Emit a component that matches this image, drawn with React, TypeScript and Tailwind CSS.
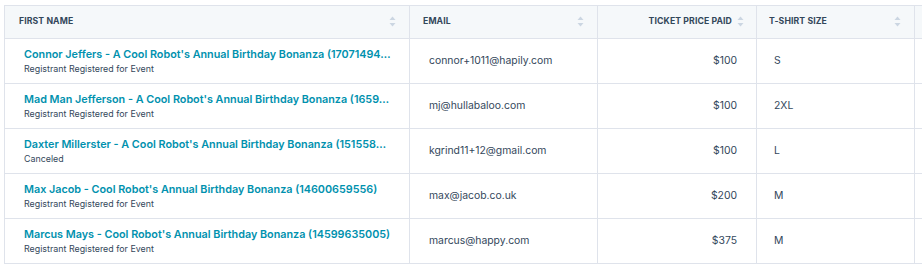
import React from "react";

const rows = [
  { name: "Connor Jeffers - A Cool Robot's Annual Birthday Bonanza (17071494…", sub: "Registrant Registered for Event", email: "connor+1011@hapily.com", price: "$100", size: "S" },
  { name: "Mad Man Jefferson - A Cool Robot's Annual Birthday Bonanza (1659…", sub: "Registrant Registered for Event", email: "mj@hullabaloo.com", price: "$100", size: "2XL" },
  { name: "Daxter Millerster - A Cool Robot's Annual Birthday Bonanza (151558…", sub: "Canceled", email: "kgrind11+12@gmail.com", price: "$100", size: "L" },
  { name: "Max Jacob - Cool Robot's Annual Birthday Bonanza (14600659556)", sub: "Registrant Registered for Event", email: "max@jacob.co.uk", price: "$200", size: "M" },
  { name: "Marcus Mays - Cool Robot's Annual Birthday Bonanza (14599635005)", sub: "Registrant Registered for Event", email: "marcus@happy.com", price: "$375", size: "M" },
];

function SortIcon() {
  return (
    <svg width="7" height="11" viewBox="0 0 7 11" className="shrink-0">
      <path d="M3.5 0.5 L6.5 4 L0.5 4 Z" fill="#cbd6e2" />
      <path d="M3.5 10.5 L6.5 7 L0.5 7 Z" fill="#cbd6e2" />
    </svg>
  );
}

export default function App() {
  return (
    <div className="w-[922px] h-[273px] overflow-hidden bg-white pl-[4px] pt-[5px]" style={{ fontFamily: '"Inter", "Liberation Sans", sans-serif' }}>
      <table className="table-fixed border-collapse w-[1010px] text-[#33475b]">
        <colgroup>
          <col className="w-[405px]" />
          <col className="w-[188px]" />
          <col className="w-[159px]" />
          <col className="w-[158px]" />
          <col className="w-[100px]" />
        </colgroup>
        <thead>
          <tr className="h-[33px] bg-[#f5f8fa]">
            <th className="border border-[#dfe3eb] pl-[14px] pr-[13px] text-left">
              <div className="flex items-center justify-between">
                <span className="text-[8.7px] font-bold tracking-[0.1px] text-[#33475b]">FIRST NAME</span>
                <SortIcon />
              </div>
            </th>
            <th className="border border-[#dfe3eb] pl-[13px] pr-[13px] text-left">
              <div className="flex items-center justify-between">
                <span className="text-[8.7px] font-bold tracking-[0.1px]">EMAIL</span>
                <SortIcon />
              </div>
            </th>
            <th className="border border-[#dfe3eb] pr-[12px] text-right">
              <div className="flex items-center justify-end gap-[5px]">
                <span className="text-[8.7px] font-bold tracking-[0.1px]">TICKET PRICE PAID</span>
                <SortIcon />
              </div>
            </th>
            <th className="border border-[#dfe3eb] pl-[12px] pr-[13px] text-left">
              <div className="flex items-center justify-between">
                <span className="text-[8.7px] font-bold tracking-[0.1px]">T-SHIRT SIZE</span>
                <SortIcon />
              </div>
            </th>
            <th className="border border-[#dfe3eb]"></th>
          </tr>
        </thead>
        <tbody>
          {rows.map((r, i) => (
            <tr key={i} className="h-[45px]">
              <td className="border border-[#dfe3eb] pl-[19px] pr-[10px] align-middle">
                <div className="text-[10.8px] font-semibold text-[#0091ae] leading-[15px] truncate">{r.name}</div>
                <div className="text-[8.9px] leading-[13px] text-[#33475b]">{r.sub}</div>
              </td>
              <td className="border border-[#dfe3eb] pl-[19px] text-[10.4px] align-middle">{r.email}</td>
              <td className="border border-[#dfe3eb] pr-[19px] text-right text-[10.4px] align-middle">{r.price}</td>
              <td className="border border-[#dfe3eb] pl-[17px] text-[10.4px] align-middle">{r.size}</td>
              <td className="border border-[#dfe3eb]"></td>
            </tr>
          ))}
        </tbody>
      </table>
    </div>
  );
}
